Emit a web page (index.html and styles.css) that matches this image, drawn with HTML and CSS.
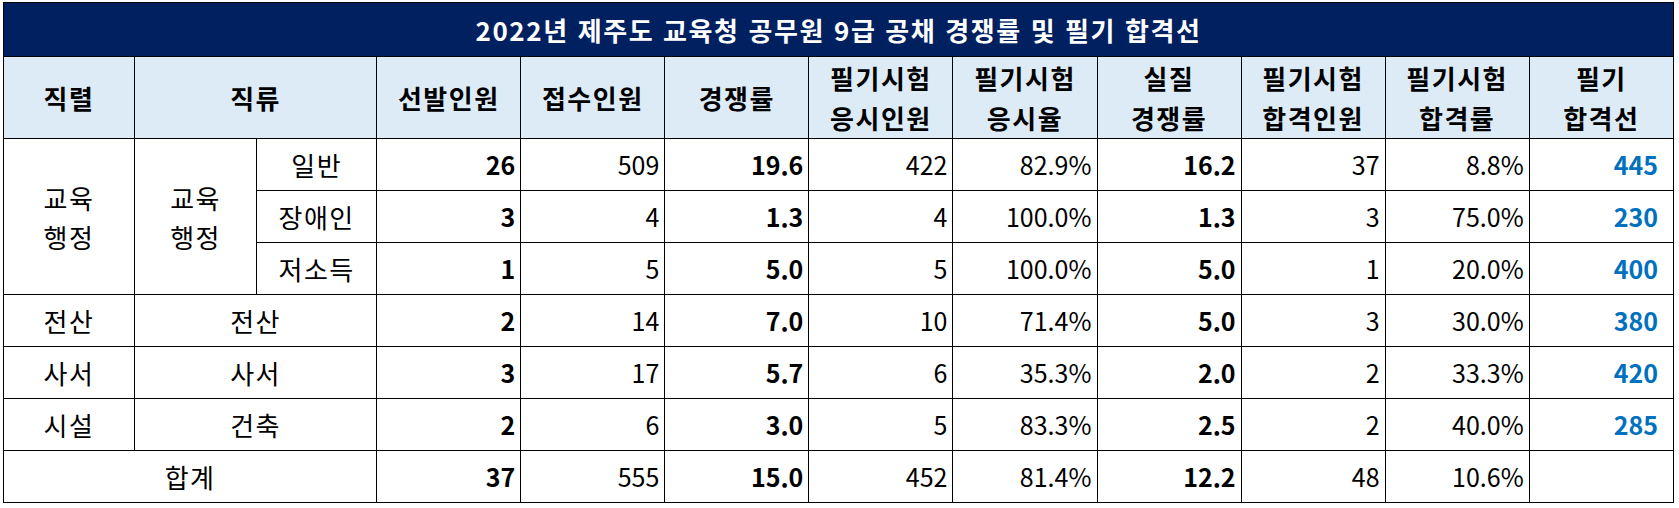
FILE: index.html
```html
<!DOCTYPE html>
<html lang="ko">
<head>
<meta charset="utf-8">
<title>2022년 제주도 교육청 공무원 9급 공채 경쟁률 및 필기 합격선</title>
<link rel="stylesheet" href="styles.css">
</head>
<body>
<div class="wrap">
<table class="sheet">
  <colgroup>
    <col class="c-a"><col class="c-b"><col class="c-c">
    <col class="c-n"><col class="c-n"><col class="c-n"><col class="c-n"><col class="c-n">
    <col class="c-n"><col class="c-n"><col class="c-n"><col class="c-n">
  </colgroup>
  <thead>
    <tr class="title-row"><th colspan="12">2022년 제주도 교육청 공무원 9급 공채 경쟁률 및 필기 합격선</th></tr>
    <tr class="head-row">
      <th>직렬</th>
      <th colspan="2">직류</th>
      <th>선발인원</th>
      <th>접수인원</th>
      <th>경쟁률</th>
      <th>필기시험<br>응시인원</th>
      <th>필기시험<br>응시율</th>
      <th>실질<br>경쟁률</th>
      <th>필기시험<br>합격인원</th>
      <th>필기시험<br>합격률</th>
      <th>필기<br>합격선</th>
    </tr>
  </thead>
  <tbody>
    <tr>
      <td class="txt" rowspan="3">교육<br>행정</td>
      <td class="txt" rowspan="3">교육<br>행정</td>
      <td class="txt">일반</td>
      <td class="num b">26</td><td class="num">509</td><td class="num b">19.6</td>
      <td class="num">422</td><td class="num">82.9%</td><td class="num b">16.2</td>
      <td class="num">37</td><td class="num">8.8%</td><td class="num cut">445</td>
    </tr>
    <tr>
      <td class="txt">장애인</td>
      <td class="num b">3</td><td class="num">4</td><td class="num b">1.3</td>
      <td class="num">4</td><td class="num">100.0%</td><td class="num b">1.3</td>
      <td class="num">3</td><td class="num">75.0%</td><td class="num cut">230</td>
    </tr>
    <tr>
      <td class="txt">저소득</td>
      <td class="num b">1</td><td class="num">5</td><td class="num b">5.0</td>
      <td class="num">5</td><td class="num">100.0%</td><td class="num b">5.0</td>
      <td class="num">1</td><td class="num">20.0%</td><td class="num cut">400</td>
    </tr>
    <tr>
      <td class="txt">전산</td>
      <td class="txt" colspan="2">전산</td>
      <td class="num b">2</td><td class="num">14</td><td class="num b">7.0</td>
      <td class="num">10</td><td class="num">71.4%</td><td class="num b">5.0</td>
      <td class="num">3</td><td class="num">30.0%</td><td class="num cut">380</td>
    </tr>
    <tr>
      <td class="txt">사서</td>
      <td class="txt" colspan="2">사서</td>
      <td class="num b">3</td><td class="num">17</td><td class="num b">5.7</td>
      <td class="num">6</td><td class="num">35.3%</td><td class="num b">2.0</td>
      <td class="num">2</td><td class="num">33.3%</td><td class="num cut">420</td>
    </tr>
    <tr>
      <td class="txt">시설</td>
      <td class="txt" colspan="2">건축</td>
      <td class="num b">2</td><td class="num">6</td><td class="num b">3.0</td>
      <td class="num">5</td><td class="num">83.3%</td><td class="num b">2.5</td>
      <td class="num">2</td><td class="num">40.0%</td><td class="num cut">285</td>
    </tr>
    <tr>
      <td class="txt" colspan="3">합계</td>
      <td class="num b">37</td><td class="num">555</td><td class="num b">15.0</td>
      <td class="num">452</td><td class="num">81.4%</td><td class="num b">12.2</td>
      <td class="num">48</td><td class="num">10.6%</td><td class="num"></td>
    </tr>
  </tbody>
</table>
</div>
</body>
</html>
```

FILE: styles.css
```css
html, body {
  margin: 0;
  padding: 0;
  background: #ffffff;
}

.wrap {
  padding: 2px 0 0 3px;
}

.sheet {
  border-collapse: collapse;
  table-layout: fixed;
  width: 1671px;
  font-family: "Noto Sans CJK KR", "Noto Sans", sans-serif;
  font-size: 25px;
  color: #000000;
}

.c-a { width: 131px; }
.c-b { width: 122px; }
.c-c { width: 120px; }
.c-n { width: 144px; }

.sheet th,
.sheet td {
  border: 1px solid #000000;
  padding: 0;
  line-height: 39px;
  vertical-align: middle;
  white-space: nowrap;
  overflow: hidden;
}

.title-row th {
  height: 53px;
  background: #002060;
  color: #ffffff;
  font-size: 26px;
  letter-spacing: 1.6px;
  font-weight: 700;
  text-align: center;
  line-height: 40px;
}

.head-row th {
  height: 81px;
  background: #ddebf7;
  font-size: 26px;
  letter-spacing: 1.5px;
  font-weight: 700;
  text-align: center;
  line-height: 40px;
}

.sheet tbody td {
  height: 51px;
}

.txt {
  text-align: center;
  font-size: 26px;
  letter-spacing: 1.5px;
}

.num {
  text-align: right;
  padding-right: 5px !important;
}

.b {
  font-weight: 700;
}

.cut {
  font-weight: 700;
  color: #0070c0;
  padding-right: 15px !important;
}
```
